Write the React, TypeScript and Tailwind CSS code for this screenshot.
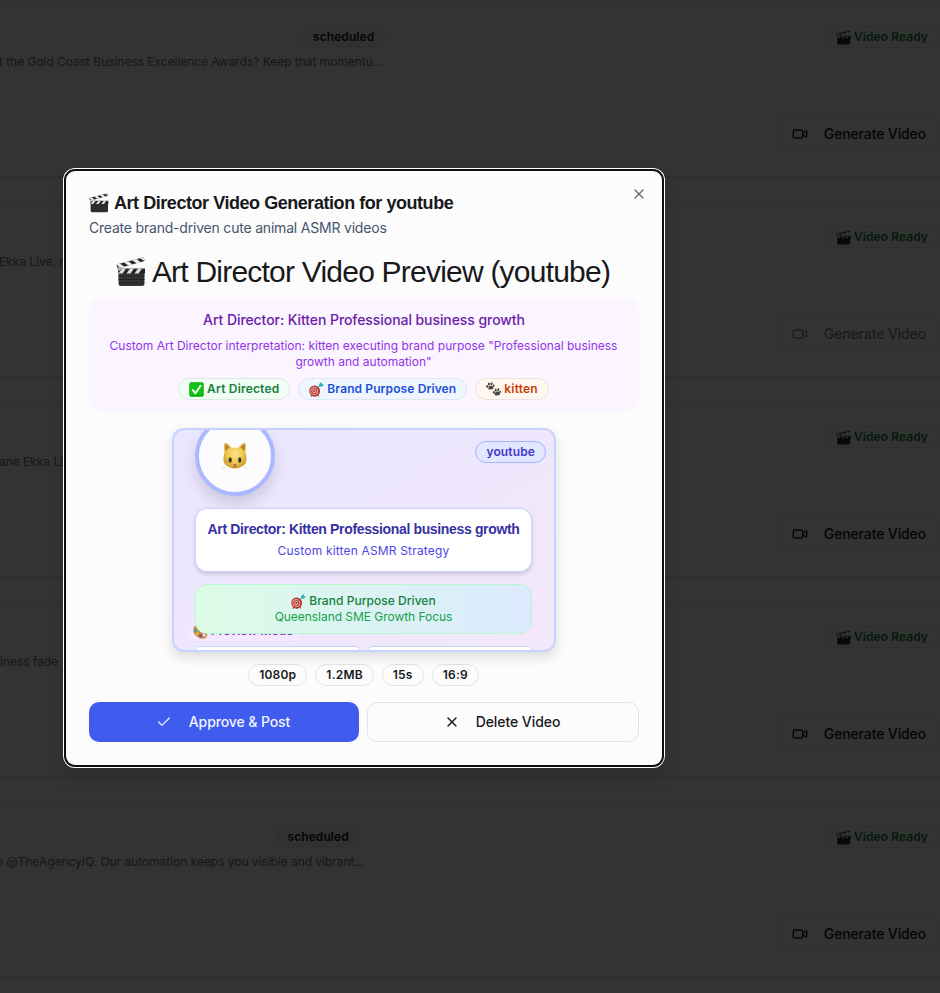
import React from "react";
import { Check, Video, X } from "lucide-react";

type IconProps = { className?: string };

function Clapper({ className = "" }: IconProps) {
  return (
    <svg viewBox="0 0 30 30" className={`shrink-0 ${className}`} aria-hidden="true">
      <path d="M2.500 13h26v13.500a2.500 2.500 0 0 1-2.500 2.500H5a2.500 2.500 0 0 1-2.500-2.500z" fill="#343434" />
      <path d="M2.500 19h26M2.500 22.500h26M3 26h25" stroke="#1d1d1d" strokeWidth=".8" />
      <path d="M1.800 11.500H29v5H2.800z" fill="#262626" />
      <path d="M6 11.500h4l-3.500 5h-4zM14 11.500h4l-3.500 5h-4zM22 11.500h4l-3.500 5h-4z" fill="#dedede" />
      <path d="M.5 7.500 27.600.2l1 3.900L1.700 11.500z" fill="#2b2b2b" />
      <path d="m.5 7.500 3.200-.9 4.600 3.100-4 1.100zM8 5.500l4.200-1.200 4.300 3.200-4 1.100zM16.200 3.300l4.200-1.200 4.300 3.100-4 1.100zM24 1.200l3.600-1 1 3.900z" fill="#efefef" />
      <circle cx="3.200" cy="11.800" r="1.900" fill="#b3b3b3" />
    </svg>
  );
}

function CheckBox({ className = "" }: IconProps) {
  return (
    <svg viewBox="0 0 16 16" className={`shrink-0 ${className}`} aria-hidden="true">
      <rect x=".3" y=".3" width="15.400" height="15.400" rx="2" fill="#07a70b" />
      <rect x="1" y="1" width="14" height="13" rx="1.500" fill="#0cc413" />
      <path d="m4 8.500 2.900 3.600L12.300 4" fill="none" stroke="#fff" strokeWidth="2" strokeLinecap="round" strokeLinejoin="round" />
    </svg>
  );
}

function Dart({ className = "" }: IconProps) {
  return (
    <svg viewBox="0 0 16 16" className={`shrink-0 ${className}`} aria-hidden="true">
      <path d="m3 14-1 1.700M9.500 14l1 1.500" stroke="#80604c" strokeWidth="1.200" />
      <ellipse cx="6" cy="9.600" rx="5.800" ry="6" fill="#b8332d" />
      <circle cx="5.600" cy="9.700" r="4.100" fill="#efd3cc" />
      <circle cx="5.600" cy="9.700" r="3.400" fill="#cb3f38" />
      <circle cx="5.600" cy="9.700" r="2" fill="#f5dfd8" />
      <circle cx="5.600" cy="9.700" r="1.200" fill="#b52b28" />
      <path d="m6.200 9.200 6.300-5.700" stroke="#5b7078" strokeWidth="1" />
      <path d="m10.500 4.500.7-3L14 0l-.3 2.200L16 2.800l-2 2-3.500.4z" fill="#36a9bd" />
    </svg>
  );
}

function Paws({ className = "" }: IconProps) {
  return (
    <svg viewBox="0 0 16 16" className={`shrink-0 ${className}`} fill="#494543" aria-hidden="true">
      <path d="M2.500 7.100c0-1.900 1.100-3 2.400-3.100 1.700 0 3 1.400 2.900 2.600-.2 1.200-1.400 1-2.500 1.200-1.100.2-2.600.7-2.800-.7z" />
      <ellipse cx="1.300" cy="4.700" rx="1.100" ry="1.500" transform="rotate(-25 1.300 4.700)" />
      <ellipse cx="3.100" cy="2.200" rx="1.100" ry="1.600" />
      <ellipse cx="5.900" cy="1.900" rx="1.100" ry="1.600" transform="rotate(12 5.900 1.900)" />
      <ellipse cx="8" cy="4.100" rx="1" ry="1.500" transform="rotate(25 8 4.100)" />
      <path d="M9.400 13.600c-.2-2 .9-3.300 2.400-3.400 1.900-.1 3.200 1.200 3.100 2.600 0 1.200-1.200 1.200-2.300 1.300-1.200.2-3 1.100-3.200-.5z" />
      <ellipse cx="8.400" cy="11.200" rx="1.100" ry="1.500" transform="rotate(-20 8.400 11.200)" />
      <ellipse cx="10.300" cy="8.500" rx="1.100" ry="1.600" />
      <ellipse cx="13.100" cy="8.200" rx="1.100" ry="1.600" transform="rotate(15 13.100 8.200)" />
      <ellipse cx="15" cy="10.600" rx=".9" ry="1.400" transform="rotate(25 15 10.600)" />
    </svg>
  );
}

function Palette({ className = "" }: IconProps) {
  return (
    <svg viewBox="0 0 16 16" className={`shrink-0 ${className}`} aria-hidden="true">
      <path d="M.2 6C.5 0 8 .5 12 4s4.500 10 .5 11.500C8 16.500 7 15 4.500 13.500S0 9.500.2 6z" fill="#cc8b42" />
      <circle cx="2.500" cy="7" r="1.600" fill="#29adbc" />
      <circle cx="4.500" cy="10.500" r="1.500" fill="#edba2d" />
      <circle cx="8" cy="12.500" r="1.500" fill="#743abd" />
      <circle cx="8" cy="4.500" r="1.500" fill="#d63b34" />
      <circle cx="12" cy="12" r="1.300" fill="#f3e8ff" />
    </svg>
  );
}

function Kitten({ className = "" }: IconProps) {
  return (
    <svg viewBox="0 0 26 28" className={className} aria-hidden="true">
      <defs>
        <radialGradient id="fur" cx=".5" cy=".42" r=".6">
          <stop offset="0" stopColor="#fbe78c" />
          <stop offset=".55" stopColor="#f0c850" />
          <stop offset="1" stopColor="#cf9a2b" />
        </radialGradient>
      </defs>
      <path d="M2.800 1c2.200.2 5.500 2.400 7 4.800h6.400c1.500-2.400 4.800-4.600 7-4.800.9 2.800.7 6.500.2 9.500 1.400 3.600 1.900 8.900-.5 11.800-2.400 2.700-6.200 4.200-9.900 4.200S5.500 25 3.100 22.300C.7 19.400 1.200 14.100 2.600 10.500 2.100 7.500 1.900 3.800 2.800 1z" fill="url(#fur)" />
      <path d="M3.800 2.500c-.4 2-.2 4.200.2 6.300.8-1.300 1.900-2.400 3.400-3.100-1-1.400-2.400-2.600-3.600-3.200zM22.200 2.500c.4 2 .2 4.200-.2 6.300-.8-1.300-1.900-2.400-3.400-3.100 1-1.400 2.400-2.600 3.600-3.200z" fill="#b07c2c" />
      <ellipse cx="8.200" cy="18" rx="1.600" ry="2.700" fill="#33322d" />
      <ellipse cx="17.800" cy="18" rx="1.600" ry="2.700" fill="#33322d" />
      <path d="M11.300 22h3.400L13 24z" fill="#a76258" />
      <path d="M10.800 24.800q1.300.8 2.200-.8.900 1.600 2.200.8" fill="none" stroke="#7d5724" strokeWidth=".7" />
      <path d="m3.500 25-3 1.500M22.500 25l3 1.500" stroke="#c8bfae" strokeWidth=".6" />
    </svg>
  );
}

function Badge({ className = "", children }: { className?: string; children: React.ReactNode }) {
  return (
    <span className={`inline-flex h-[22px] shrink-0 items-center rounded-full border px-2.5 text-xs font-semibold whitespace-nowrap ${className}`}>
      {children}
    </span>
  );
}

type Post = { text: string; badge?: string; offset?: string; disabled?: boolean };

const posts: Post[] = [
  { text: "t the Gold Coast Business Excellence Awards? Keep that momentu...", badge: "ml-[302px]", offset: "-ml-px" },
  { text: "Ekka Live, n", offset: "-ml-px", disabled: true },
  { text: "ane Ekka Li", offset: "-ml-px" },
  { text: "iness fade" },
  { text: "n @TheAgencyIQ. Our automation keeps you visible and vibrant...", badge: "ml-[276.500px]", offset: "-ml-1" },
];

function PostRow({ post }: { post: Post }) {
  return (
    <div className="h-44 border-y border-[#ebebed] pt-6 shadow-xs">
      <div className="flex h-[22px] items-center">
        {post.badge && <Badge className={`border-transparent bg-[#f4f4f5] tracking-[0.08px] text-[#18181b] ${post.badge}`}>scheduled</Badge>}
        <Badge className="mr-px ml-auto gap-[3px] border-[#e4ede7] bg-[#f8fcfa] tracking-[0.08px] text-[#15803d]">
          <Clapper className="size-[15px]" />
          Video Ready
        </Badge>
      </div>
      <p className={`mt-1.5 h-4 text-xs leading-4 tracking-[-0.035px] whitespace-nowrap text-gray-500 ${post.offset ?? ""}`}>{post.text}</p>
      <div className="mt-[46px] flex justify-end pr-px">
        <button className={`flex h-9 w-40 items-center rounded-[10px] border border-[#ececec] px-3 text-sm font-medium text-[#18181b] ${post.disabled ? "opacity-50" : ""}`}>
          <Video className="size-4" strokeWidth={2} />
          <span className="ml-auto tracking-[-0.13px] whitespace-nowrap">Generate Video</span>
        </button>
      </div>
    </div>
  );
}

export default function App() {
  return (
    <div className="relative h-[993px] w-[940px] overflow-hidden bg-[#fcfcfc] font-['Inter',sans-serif]">
      <div className="flex flex-col gap-6 pt-px">
        {posts.map((post) => (
          <PostRow key={post.text} post={post} />
        ))}
      </div>

      <div className="absolute inset-0 bg-black/80" />

      <section
        role="dialog"
        className="absolute top-[169px] left-16 flex h-[598px] w-[600px] flex-col rounded-[11px] border-2 border-[#101010] bg-[#fcfcfc] px-[23px] pt-[23px] shadow-[0_0_0_1px_#fff,0_10px_15px_rgba(0,0,0,0.1)]"
      >
        <button aria-label="Close" className="absolute top-[15px] right-[15px] text-[#666]">
          <X className="size-4" strokeWidth={1.900} />
        </button>
        <h2 className="flex h-[18px] items-center gap-[5px] font-['Liberation_Sans',sans-serif] text-lg leading-[18px] font-bold tracking-[-0.45px] whitespace-nowrap text-[#18181b]">
          <Clapper className="size-5" />
          Art Director Video Generation for youtube
        </h2>
        <p className="mt-1.5 h-5 text-sm leading-5 tracking-[-0.2px] whitespace-nowrap text-slate-600">Create brand-driven cute animal ASMR videos</p>
        <h1 className="mt-4 flex h-9 items-center justify-center gap-[6px] pr-[2px] font-['Liberation_Sans',sans-serif] text-[30px] leading-9 tracking-[-0.78px] whitespace-nowrap text-[#18181b]">
          <Clapper className="size-[30px]" />
          Art Director Video Preview (youtube)
        </h1>

        <div className="mt-2 flex h-[114px] shrink-0 flex-col items-center rounded-[12px] bg-[#faf5ff] pt-3 text-center">
          <h3 className="text-sm leading-5 font-medium tracking-[-0.07px] text-[#6b21a8]">Art Director: Kitten Professional business growth</h3>
          <p className="mt-2 pr-px text-xs leading-4 whitespace-nowrap text-[#9333ea]">
            Custom Art Director interpretation: kitten executing brand purpose "Professional business
            <br />
            growth and automation"
          </p>
          <div className="mt-2 flex gap-2 pr-px tracking-[0.14px]">
            <Badge className="gap-[3px] border-[#dfe9e4] bg-[#f0fdf4] tracking-[0.18px] text-[#15803d]"><CheckBox className="size-[15px]" />Art Directed</Badge>
            <Badge className="gap-[3px] border-[#dce7f1] bg-[#eff6ff] tracking-[0.11px] text-[#1d4ed8]"><Dart className="size-[15px]" />Brand Purpose Driven</Badge>
            <Badge className="gap-[3px] border-[#e9e4df] bg-[#fff7ed] tracking-[0.2px] text-[#c2410c]"><Paws className="size-[15px]" />kitten</Badge>
          </div>
        </div>

        <div className="relative mx-auto mt-4 h-[224px] w-96 shrink-0 overflow-hidden rounded-[12px] border-2 border-[#c6d2ff] bg-linear-to-br from-[#e9e6ff] to-[#f3e8fa] shadow-[0_5px_12px_rgba(0,0,0,0.13)]">
          <Badge className="absolute bottom-2 left-2 gap-[3px] border-[#e8dff0] bg-[#f3e8ff] text-[#7e22ce]"><Palette className="size-[15px]" />Preview Mode</Badge>
          <Badge className="absolute top-[11px] right-2 border-[#a3b3ff] bg-[#e0e7ff] tracking-[0.12px] text-[#4338ca]">youtube</Badge>
          <div className="relative -mt-[14px] flex flex-col pr-[22px] pl-[21px]">
            <div className="flex size-20 items-center justify-center rounded-full border-4 border-[#a9b8ff] bg-[#fcfcff] shadow-[0_8px_14px_rgba(0,0,0,0.13)]">
              <Kitten className="h-7 w-[26px]" />
            </div>
            <div className="mt-3 flex h-16 flex-col items-center rounded-[12px] border border-[#c6d2ff] bg-white pt-2.5 shadow-[0_2px_4px_rgba(0,0,0,0.16)]">
              <h4 className="font-['Liberation_Sans',sans-serif] text-sm leading-5 font-bold tracking-[-0.35px] whitespace-nowrap text-[#3730a3]">Art Director: Kitten Professional business growth</h4>
              <p className="mt-1 text-xs leading-4 tracking-[0.17px] text-[#4f46e5]">Custom kitten ASMR Strategy</p>
            </div>
            <div className="mt-3 flex h-[50px] flex-col items-center rounded-[12px] border border-[#b9f8cf] bg-linear-to-r from-[#dcfce7] to-[#dbeafe] pt-2 text-xs leading-4">
              <div className="flex h-4 items-center gap-[3px] font-medium tracking-[0.04px] text-[#15803d]"><Dart className="size-[15px]" />Brand Purpose Driven</div>
              <div className="tracking-[-0.04px] text-[#16a34a]">Queensland SME Growth Focus</div>
            </div>
            <div className="mt-3 grid grid-cols-2 gap-2">
              <div className="h-12 rounded-[4px] border border-[#c6d2ff] bg-white" />
              <div className="h-12 rounded-[4px] border border-[#c6d2ff] bg-white" />
            </div>
          </div>
        </div>

        <div className="mt-[11px] flex justify-center gap-2 pt-px pr-px">
          {["1080p", "1.2MB", "15s", "16:9"].map((label) => (
            <Badge key={label} className="border-[#e4e4e7] tracking-[0.22px] text-[#18181b]">{label}</Badge>
          ))}
        </div>

        <div className="mt-4 flex gap-2 text-sm font-medium">
          <button className="flex h-10 w-[270px] items-center justify-center gap-[17px] rounded-[10px] bg-[#405cef] pr-[2px] tracking-[-0.1px] text-[#f2f5ff]">
            <Check className="size-4" strokeWidth={1.800} />
            Approve &amp; Post
          </button>
          <button className="flex h-10 w-[272px] items-center justify-center gap-4 rounded-[10px] border border-[#e4e4e7] pr-[2px] tracking-[-0.07px] text-[#18181b]">
            <X className="size-4" strokeWidth={2} />
            Delete Video
          </button>
        </div>
      </section>
    </div>
  );
}
